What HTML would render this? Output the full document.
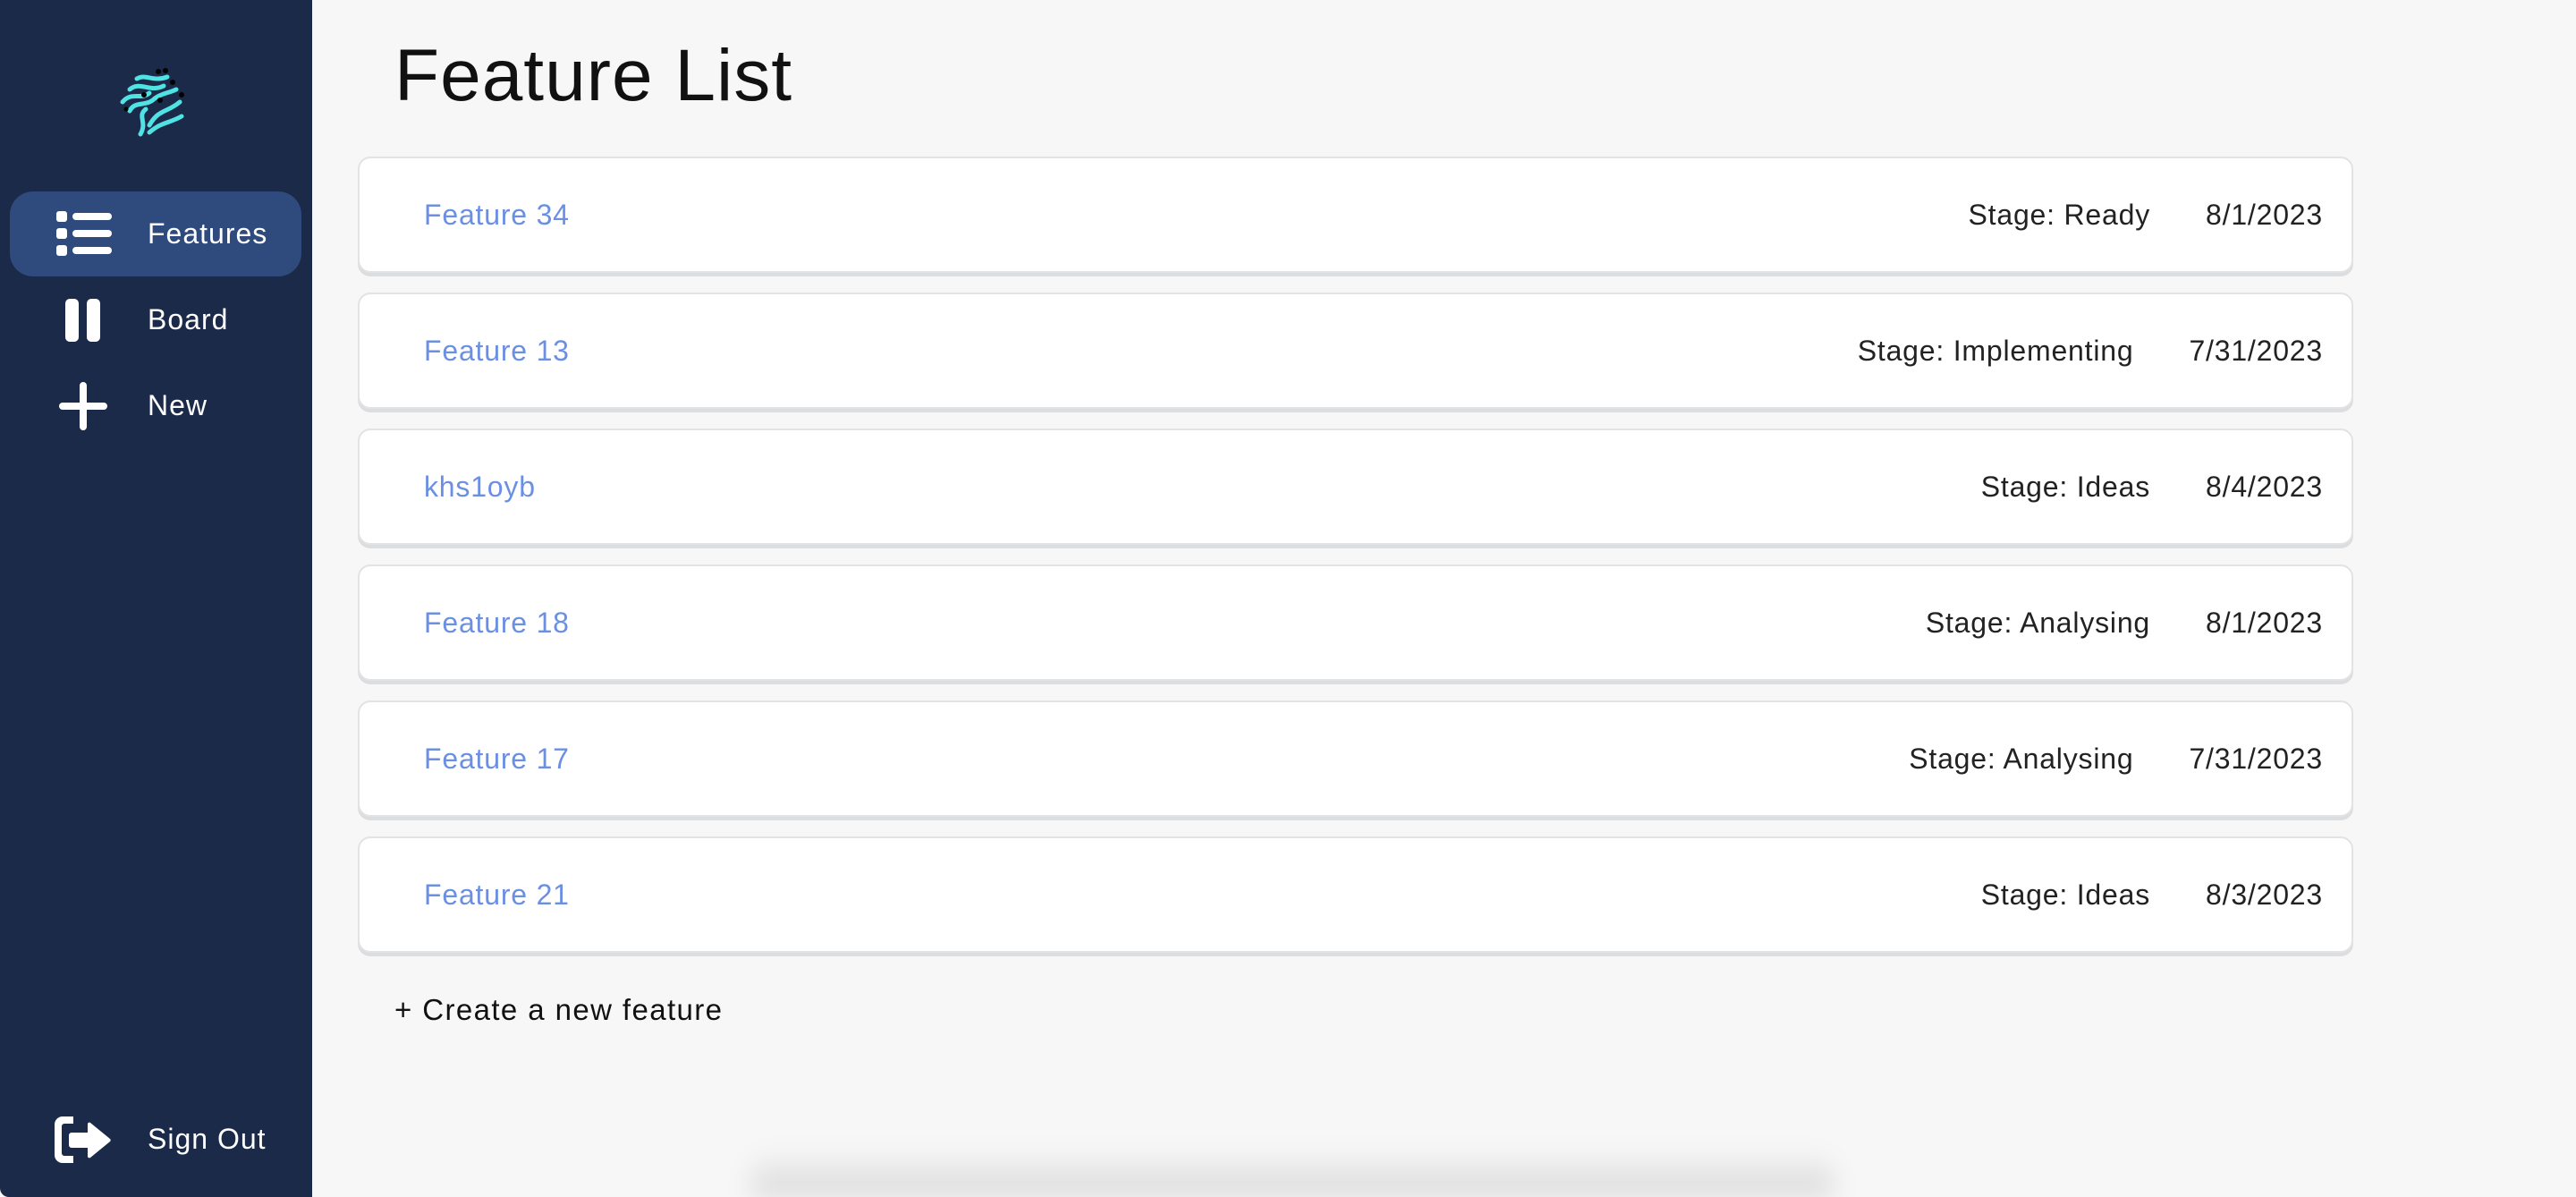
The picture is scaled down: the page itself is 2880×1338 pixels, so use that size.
<!DOCTYPE html>
<html><head><meta charset="utf-8"><style>
*{margin:0;padding:0;box-sizing:border-box}
html,body{width:2880px;height:1338px;overflow:hidden;background:#f7f7f7;font-family:"Liberation Sans",sans-serif}
.wrap{position:relative;width:2880px;height:1338px;overflow:hidden}
.side{position:absolute;left:0;top:0;width:349px;height:1338px;background:#1c2a4a;border-bottom-left-radius:10px}
.pill{position:absolute;left:11px;top:214px;width:326px;height:95px;border-radius:26px;background:#2f4a7c}
.nav{position:absolute;left:165px;color:#fff;font-size:32px;letter-spacing:1px;line-height:1}
.title{position:absolute;left:441px;top:44px;font-size:82px;color:#111;letter-spacing:1px;line-height:1}
.card{position:absolute;left:400px;width:2231px;height:130px;background:#fff;border:2px solid #e2e3e5;border-radius:14px;box-shadow:0 4px 0 #dcdddf}
.card .n{position:absolute;left:72px;top:47px;font-size:32px;color:#6b8fe3;letter-spacing:.8px;line-height:1}
.card .r{position:absolute;right:32px;top:47px;font-size:32px;color:#222;letter-spacing:.8px;line-height:1;display:flex}
.card .r span:last-child{margin-left:62px}
.create{position:absolute;left:441px;top:1112px;font-size:33px;color:#111;letter-spacing:1.4px;line-height:1}
.shadow{position:absolute;left:840px;top:1285px;width:1210px;height:53px;border-radius:30px 30px 0 0;background:linear-gradient(to bottom,rgba(0,0,0,0),rgba(0,0,0,.13));filter:blur(14px)}
</style></head><body><div class="wrap">
<div class="side">
<svg style="position:absolute;left:133px;top:74px" width="80" height="80" viewBox="0 0 80 80" fill="none" stroke-linecap="round">
<g stroke="#4fe3e3" stroke-width="5">
<path d="M20 14 C30 8 38 18 54 12"/>
<path d="M12 26 C24 16 34 30 50 22"/>
<path d="M4 40 C14 28 24 38 34 30"/>
<path d="M12 50 C18 38 30 46 40 36 C48 30 56 30 64 26"/>
<path d="M24 76 C32 62 20 56 30 48"/>
<path d="M34 66 C44 48 54 52 68 40"/>
<path d="M34 74 C48 62 56 64 70 56"/>
</g>
<g fill="#000"><circle cx="44" cy="6" r="3"/><circle cx="52" cy="5" r="3"/><circle cx="60" cy="18" r="3"/><circle cx="28" cy="32" r="3"/><circle cx="46" cy="38" r="3"/><circle cx="70" cy="32" r="3"/><circle cx="8" cy="48" r="2.5"/></g>
</svg>
<div class="pill"></div>
<svg style="position:absolute;left:62px;top:234px" width="66" height="54" viewBox="0 0 66 54" fill="#fff">
<rect x="1" y="2" width="12" height="12" rx="3"/><rect x="1" y="21" width="12" height="12" rx="3"/><rect x="1" y="40" width="12" height="12" rx="3"/>
<rect x="19" y="4" width="44" height="8" rx="4"/><rect x="19" y="23" width="44" height="8" rx="4"/><rect x="19" y="42" width="44" height="8" rx="4"/>
</svg>
<div class="nav" style="top:245px">Features</div>
<svg style="position:absolute;left:72px;top:333px" width="42" height="50" viewBox="0 0 42 50" fill="#fff">
<rect x="1" y="1" width="15" height="48" rx="5"/><rect x="25" y="1" width="15" height="48" rx="5"/>
</svg>
<div class="nav" style="top:341px">Board</div>
<svg style="position:absolute;left:66px;top:427px" width="54" height="54" viewBox="0 0 54 54" stroke="#fff" stroke-width="8" stroke-linecap="round">
<path d="M27 4V50M4 27H50"/>
</svg>
<div class="nav" style="top:437px">New</div>
<svg style="position:absolute;left:60px;top:1246px" width="66" height="56" viewBox="0 0 66 56" fill="#fff">
<path d="M22 2H10a9 9 0 0 0-9 9v34a9 9 0 0 0 9 9h12v-8H12a3 3 0 0 1-3-3V13a3 3 0 0 1 3-3h10z"/>
<path d="M20 20h18V10a2 2 0 0 1 3-1l22 18a2 2 0 0 1 0 3L41 48a2 2 0 0 1-3-1V37H20a3 3 0 0 1-3-3V23a3 3 0 0 1 3-3z"/>
</svg>
<div class="nav" style="top:1257px">Sign Out</div>
</div>
<div class="title">Feature List</div>
<div class="card" style="top:175px"><div class="n">Feature 34</div><div class="r"><span>Stage: Ready</span><span>8/1/2023</span></div></div>
<div class="card" style="top:327px"><div class="n">Feature 13</div><div class="r"><span>Stage: Implementing</span><span>7/31/2023</span></div></div>
<div class="card" style="top:479px"><div class="n">khs1oyb</div><div class="r"><span>Stage: Ideas</span><span>8/4/2023</span></div></div>
<div class="card" style="top:631px"><div class="n">Feature 18</div><div class="r"><span>Stage: Analysing</span><span>8/1/2023</span></div></div>
<div class="card" style="top:783px"><div class="n">Feature 17</div><div class="r"><span>Stage: Analysing</span><span>7/31/2023</span></div></div>
<div class="card" style="top:935px"><div class="n">Feature 21</div><div class="r"><span>Stage: Ideas</span><span>8/3/2023</span></div></div>
<div class="create">+ Create a new feature</div>
<div class="shadow"></div>
</div></body></html>
